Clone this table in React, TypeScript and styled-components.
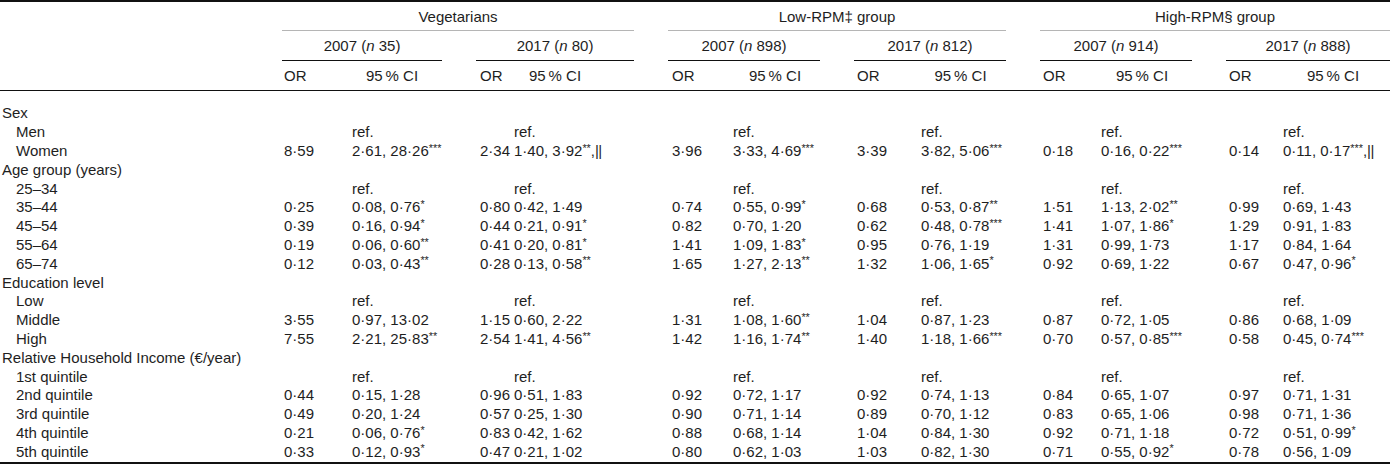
import React from "react";
import styled, { createGlobalStyle } from "styled-components";

const GlobalStyle = createGlobalStyle`
  *, *::before, *::after { box-sizing: border-box; }
  html, body { margin: 0; padding: 0; background: #ffffff; }
  body {
    font-family: "Liberation Sans", Arial, Helvetica, sans-serif;
    font-size: 15px;
    color: #1e1e1e;
  }
`;

const Table = styled.div`
  width: 1390px;
  border-top: 2px solid #111;
  border-bottom: 2px solid #111;
`;

const Head = styled.div`
  border-bottom: 1px solid #111;
`;

const GridRow = styled.div<{ $h: number }>`
  display: grid;
  grid-template-columns: 248px 160px 158px 152px 152px 152px 164px;
  column-gap: 34px;
  height: ${(p) => p.$h}px;
`;

const Empty = styled.div``;

const GroupHead = styled.div`
  grid-column: span 2;
  display: flex;
  align-items: center;
  justify-content: center;
  border-bottom: 1px solid #b5b5b5;
  white-space: nowrap;
`;

const YearHead = styled.div`
  display: flex;
  align-items: center;
  justify-content: center;
  border-bottom: 1px solid #111;
  white-space: nowrap;
`;

const Block = styled.div<{ $orW: number }>`
  display: grid;
  grid-template-columns: ${(p) => p.$orW}px 1fr;
  align-items: center;
  white-space: nowrap;
`;

const OrHead = styled.div<{ $pad: number }>`
  padding-left: ${(p) => p.$pad}px;
`;

const CiHead = styled.div<{ $pr: number }>`
  text-align: center;
  padding-right: ${(p) => p.$pr}px;
`;

const Body = styled.div`
  padding: 13px 0 1px;
`;

const BodyRow = styled.div`
  display: grid;
  grid-template-columns: 248px 160px 158px 152px 152px 152px 164px;
  column-gap: 34px;
  height: 18.8px;
  align-items: center;
  line-height: 18px;
`;

const Label = styled.div<{ $indent: boolean }>`
  padding-left: ${(p) => (p.$indent ? 16 : 2)}px;
  white-space: nowrap;
`;

const OrVal = styled.div<{ $pad: number }>`
  padding-left: ${(p) => p.$pad}px;
`;

const CiVal = styled.div``;

const Sup = styled.span`
  font-size: 0.72em;
  position: relative;
  top: -0.4em;
  line-height: 0;
`;

const Bars = styled.span`
  letter-spacing: -0.5px;
`;

const blocks = [
  { orW: 70, pad: 2, pr: 10 },
  { orW: 38, pad: 4, pr: 38 },
  { orW: 65, pad: 4, pr: 3 },
  { orW: 67, pad: 3, pr: 6 },
  { orW: 61, pad: 3, pr: 9 },
  { orW: 57, pad: 3, pr: 7 },
];

const years = [
  ["2007", "35"],
  ["2017", "80"],
  ["2007", "898"],
  ["2017", "812"],
  ["2007", "914"],
  ["2017", "888"],
];

type Row =
  | { label: string; kind: "section" }
  | { label: string; kind: "ref" }
  | { label: string; kind: "data"; v: string[] };

const rows: Row[] = [
  { label: "Sex", kind: "section" },
  { label: "Men", kind: "ref" },
  {
    label: "Women",
    kind: "data",
    v: ["8·59", "2·61, 28·26***", "2·34", "1·40, 3·92**,||", "3·96", "3·33, 4·69***", "3·39", "3·82, 5·06***", "0·18", "0·16, 0·22***", "0·14", "0·11, 0·17***,||"],
  },
  { label: "Age group (years)", kind: "section" },
  { label: "25–34", kind: "ref" },
  {
    label: "35–44",
    kind: "data",
    v: ["0·25", "0·08, 0·76*", "0·80", "0·42, 1·49", "0·74", "0·55, 0·99*", "0·68", "0·53, 0·87**", "1·51", "1·13, 2·02**", "0·99", "0·69, 1·43"],
  },
  {
    label: "45–54",
    kind: "data",
    v: ["0·39", "0·16, 0·94*", "0·44", "0·21, 0·91*", "0·82", "0·70, 1·20", "0·62", "0·48, 0·78***", "1·41", "1·07, 1·86*", "1·29", "0·91, 1·83"],
  },
  {
    label: "55–64",
    kind: "data",
    v: ["0·19", "0·06, 0·60**", "0·41", "0·20, 0·81*", "1·41", "1·09, 1·83*", "0·95", "0·76, 1·19", "1·31", "0·99, 1·73", "1·17", "0·84, 1·64"],
  },
  {
    label: "65–74",
    kind: "data",
    v: ["0·12", "0·03, 0·43**", "0·28", "0·13, 0·58**", "1·65", "1·27, 2·13**", "1·32", "1·06, 1·65*", "0·92", "0·69, 1·22", "0·67", "0·47, 0·96*"],
  },
  { label: "Education level", kind: "section" },
  { label: "Low", kind: "ref" },
  {
    label: "Middle",
    kind: "data",
    v: ["3·55", "0·97, 13·02", "1·15", "0·60, 2·22", "1·31", "1·08, 1·60**", "1·04", "0·87, 1·23", "0·87", "0·72, 1·05", "0·86", "0·68, 1·09"],
  },
  {
    label: "High",
    kind: "data",
    v: ["7·55", "2·21, 25·83**", "2·54", "1·41, 4·56**", "1·42", "1·16, 1·74**", "1·40", "1·18, 1·66***", "0·70", "0·57, 0·85***", "0·58", "0·45, 0·74***"],
  },
  { label: "Relative Household Income (€/year)", kind: "section" },
  { label: "1st quintile", kind: "ref" },
  {
    label: "2nd quintile",
    kind: "data",
    v: ["0·44", "0·15, 1·28", "0·96", "0·51, 1·83", "0·92", "0·72, 1·17", "0·92", "0·74, 1·13", "0·84", "0·65, 1·07", "0·97", "0·71, 1·31"],
  },
  {
    label: "3rd quintile",
    kind: "data",
    v: ["0·49", "0·20, 1·24", "0·57", "0·25, 1·30", "0·90", "0·71, 1·14", "0·89", "0·70, 1·12", "0·83", "0·65, 1·06", "0·98", "0·71, 1·36"],
  },
  {
    label: "4th quintile",
    kind: "data",
    v: ["0·21", "0·06, 0·76*", "0·83", "0·42, 1·62", "0·88", "0·68, 1·14", "1·04", "0·84, 1·30", "0·92", "0·71, 1·18", "0·72", "0·51, 0·99*"],
  },
  {
    label: "5th quintile",
    kind: "data",
    v: ["0·33", "0·12, 0·93*", "0·47", "0·21, 1·02", "0·80", "0·62, 1·03", "1·03", "0·82, 1·30", "0·71", "0·55, 0·92*", "0·78", "0·56, 1·09"],
  },
];

function Ci({ text }: { text: string }) {
  const m = text.match(/^(.*?)(\*+)?(,\|\|)?$/);
  const main = m ? m[1] : text;
  const stars = m && m[2];
  const bars = m && m[3];
  return (
    <CiVal>
      {main}
      {stars && <Sup>{stars}</Sup>}
      {bars && (
        <>
          ,<Bars>||</Bars>
        </>
      )}
    </CiVal>
  );
}

export default function App() {
  return (
    <>
      <GlobalStyle />
      <Table>
        <Head>
          <GridRow $h={29}>
            <Empty />
            <GroupHead>Vegetarians</GroupHead>
            <GroupHead>Low-RPM‡ group</GroupHead>
            <GroupHead>High-RPM§ group</GroupHead>
          </GridRow>
          <GridRow $h={30}>
            <Empty />
            {years.map(([y, n], i) => (
              <YearHead key={i}>
                {y}&nbsp;(<i>n</i>&nbsp;{n})
              </YearHead>
            ))}
          </GridRow>
          <GridRow $h={29}>
            <Empty />
            {blocks.map((b, i) => (
              <Block key={i} $orW={b.orW}>
                <OrHead $pad={b.pad}>OR</OrHead>
                <CiHead $pr={b.pr}>95&#8201;% CI</CiHead>
              </Block>
            ))}
          </GridRow>
        </Head>
        <Body>
          {rows.map((r, ri) => (
            <BodyRow key={ri}>
              <Label $indent={r.kind !== "section"}>{r.label}</Label>
              {r.kind !== "section" &&
                blocks.map((b, i) => (
                  <Block key={i} $orW={b.orW}>
                    <OrVal $pad={b.pad}>{r.kind === "data" ? r.v[i * 2] : ""}</OrVal>
                    {r.kind === "data" ? <Ci text={r.v[i * 2 + 1]} /> : <CiVal>ref.</CiVal>}
                  </Block>
                ))}
            </BodyRow>
          ))}
        </Body>
      </Table>
    </>
  );
}
